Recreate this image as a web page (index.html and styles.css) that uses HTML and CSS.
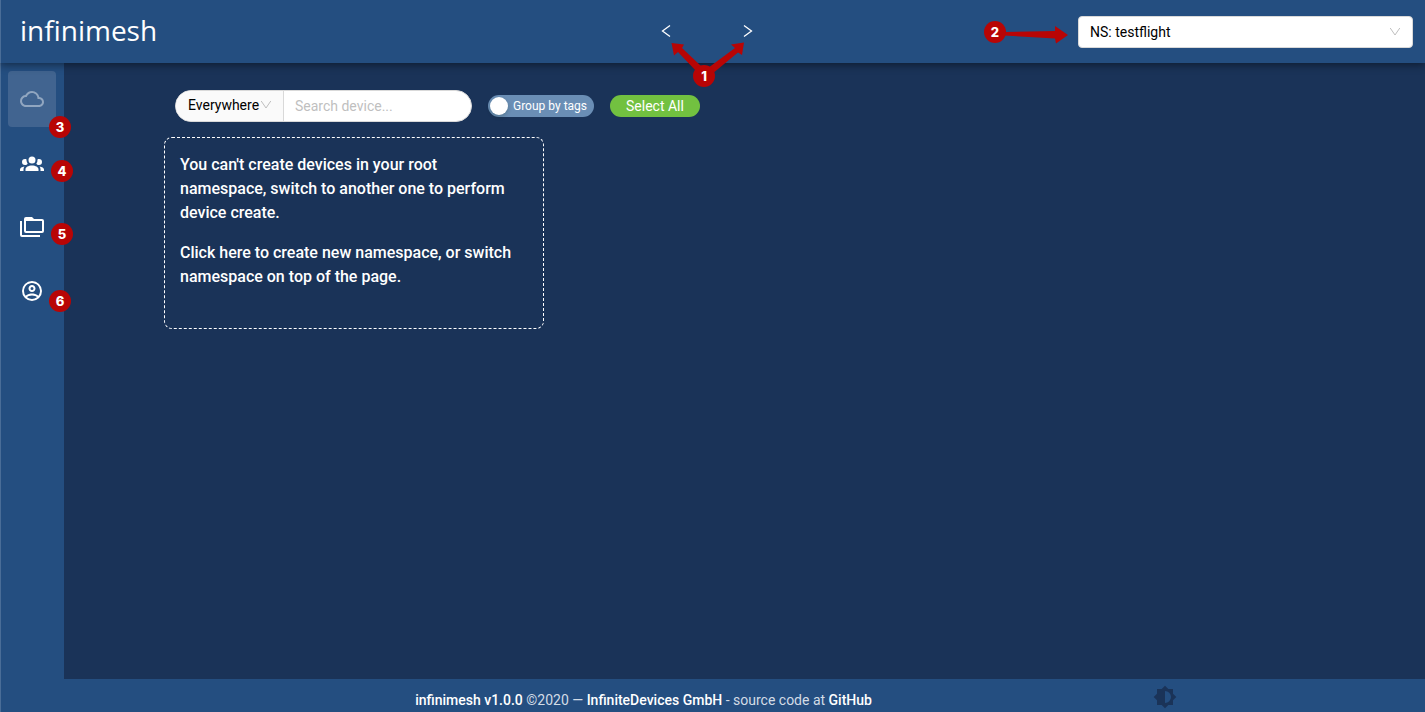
FILE: index.html
```html
<!DOCTYPE html>
<html lang="en">
<head>
<meta charset="utf-8">
<title>infinimesh</title>
<link rel="stylesheet" href="styles.css">
</head>
<body>
<div class="app">
  <header class="header">
    <a class="logo" href="#">infinimesh</a>
    <nav class="pager" aria-label="History">
      <button class="pager-button" type="button" aria-label="Back"><svg width="14" height="14" viewBox="0 0 14 14"><path d="M10 1.500 2.500 7l7.500 5.500"/></svg></button>
      <button class="pager-button" type="button" aria-label="Forward"><svg width="14" height="14" viewBox="0 0 14 14"><path d="M3 1.500 10.500 7 3 12.500"/></svg></button>
    </nav>
    <div class="namespace">
      <select class="namespace-select" aria-label="Namespace"><option>NS: testflight</option></select>
      <svg class="chevron" width="12" height="12" viewBox="0 0 12 12"><path d="M1.200 2 6 9 10.800 2"/></svg>
    </div>
  </header>

  <nav class="sidebar" aria-label="Main">
    <a class="side-link active" href="#" aria-label="Devices"><svg width="24" height="24" viewBox="0 0 24 24"><path fill="currentColor" d="M19.350 10.040A7.490 7.490 0 0 0 12 4C9.110 4 6.600 5.640 5.350 8.040A5.994 5.994 0 0 0 0 14c0 3.310 2.690 6 6 6h13c2.760 0 5-2.240 5-5 0-2.640-2.050-4.780-4.650-4.960zM19 18H6c-2.210 0-4-1.790-4-4s1.790-4 4-4h.710C7.370 7.690 9.480 6 12 6c3.040 0 5.500 2.460 5.500 5.500v.500H19c1.660 0 3 1.340 3 3s-1.340 3-3 3z"/></svg></a>
    <a class="side-link" href="#" aria-label="Accounts"><svg width="24" height="24" viewBox="0 0 24 24" fill="currentColor"><path d="M12 5.500A3.500 3.500 0 0 1 15.500 9 3.500 3.500 0 0 1 12 12.500 3.500 3.500 0 0 1 8.500 9 3.500 3.500 0 0 1 12 5.500M5 8c.560 0 1.080.150 1.530.420-.150 1.430.270 2.850 1.130 3.960C7.160 13.340 6.160 14 5 14a3 3 0 0 1-3-3 3 3 0 0 1 3-3m14 0a3 3 0 0 1 3 3 3 3 0 0 1-3 3c-1.160 0-2.160-.660-2.660-1.620a5.536 5.536 0 0 0 1.130-3.960C17.920 8.150 18.440 8 19 8M5.500 18.250c0-2.070 2.910-3.750 6.500-3.750s6.500 1.680 6.500 3.750V20h-13v-1.750M0 20v-1.500c0-1.390 1.890-2.560 4.450-2.900-.590.680-.950 1.620-.950 2.650V20H0m24 0h-3.500v-1.750c0-1.030-.360-1.970-.950-2.650 2.560.340 4.450 1.510 4.450 2.900V20z"/></svg></a>
    <a class="side-link" href="#" aria-label="Namespaces"><svg width="24" height="24" viewBox="0 0 24 24" fill="currentColor"><path d="M22 4a2 2 0 0 1 2 2v10a2 2 0 0 1-2 2H6a2 2 0 0 1-2-2V4a2 2 0 0 1 2-2h6l2 2h8M2 6v14h18v2H2a2 2 0 0 1-2-2V6h2m4 0v10h16V6H6z"/></svg></a>
    <a class="side-link" href="#" aria-label="Profile"><svg width="24" height="24" viewBox="0 0 24 24" fill="currentColor"><path d="M12 2A10 10 0 0 0 2 12a10 10 0 0 0 10 10 10 10 0 0 0 10-10A10 10 0 0 0 12 2M7.070 18.280c.430-.900 3.050-1.780 4.930-1.780s4.510.880 4.930 1.780A7.893 7.893 0 0 1 12 20c-1.860 0-3.570-.640-4.930-1.720m11.290-1.450c-1.430-1.740-4.900-2.330-6.360-2.330s-4.930.590-6.360 2.330A7.928 7.928 0 0 1 4 12c0-4.410 3.590-8 8-8s8 3.590 8 8c0 1.820-.620 3.500-1.640 4.830M12 6c-1.940 0-3.500 1.560-3.500 3.500S10.060 13 12 13s3.500-1.560 3.500-3.500S13.940 6 12 6m0 5a1.500 1.500 0 1 1 0-3 1.500 1.500 0 0 1 0 3z"/></svg></a>
  </nav>

  <main class="content">
    <div class="toolbar">
      <div class="search">
        <div class="scope">
          <select class="scope-select" aria-label="Search scope"><option>Everywhere</option></select>
          <svg class="chevron" width="12" height="12" viewBox="0 0 12 12"><path d="M1.200 2 6 9 10.800 2"/></svg>
        </div>
        <input class="search-input" type="text" placeholder="Search device..." aria-label="Search device">
      </div>
      <label class="switch"><input class="switch-input" type="checkbox">Group by tags</label>
      <button class="select-all" type="button">Select All</button>
    </div>
    <section class="notice">
      <p class="notice-text">You can't create devices in your root namespace, switch to another one to perform device create.</p>
      <p class="notice-text">Click here to create new namespace, or switch namespace on top of the page.</p>
    </section>
  </main>

  <footer class="footer">
    <p class="credits"><a class="credit-link" href="#">infinimesh v1.0.0</a> ©2020 — <a class="credit-link" href="#">InfiniteDevices GmbH</a> - source code at <a class="credit-link" href="#">GitHub</a></p>
    <button class="theme" type="button" aria-label="Toggle theme"><svg width="24" height="24" viewBox="0 0 24 24" fill="currentColor"><path d="M12 18V6a6 6 0 0 1 6 6 6 6 0 0 1-6 6m8-2.690L23.310 12 20 8.690V4h-4.690L12 .690 8.690 4H4v4.690L.690 12 4 15.310V20h4.690L12 23.310 15.310 20H20v-4.690z"/></svg></button>
  </footer>

  <svg class="arrows" width="1425" height="120" viewBox="0 0 1425 120" aria-hidden="true">
    <path d="M671.500 43 684 44.500 682 48 701 66 696 71 678 52 674 55.500z"/>
    <path d="M744 42.500 742 55 738 52.500 712 74 708 68 735 48 731 44.500z"/>
    <path d="M1004 32 1055 31 1055 26 1068 35 1056 43.500 1055 38.500 1004 35.500z"/>
  </svg>
  <span class="marker m1">1</span>
  <span class="marker m2">2</span>
  <span class="marker m3">3</span>
  <span class="marker m4">4</span>
  <span class="marker m5">5</span>
  <span class="marker m6">6</span>
</div>
</body>
</html>
```
FILE: styles.css
```css
* { box-sizing: border-box; }

body {
  margin: 0;
  font-family: Roboto, "Liberation Sans", sans-serif;
  font-size: 14px;
  color: #fff;
  background: #1a3358;
}

a { color: inherit; text-decoration: none; }
button, input, select { font: inherit; margin: 0; }
button { padding: 0; border: 0; background: none; color: inherit; cursor: pointer; }
svg { display: block; }

.app {
  position: relative;
  display: grid;
  grid-template: 63px 1fr 33px / 64px 1fr;
  min-height: 100vh;
  overflow: hidden;
}

.header {
  grid-column: 1 / -1;
  display: grid;
  grid-template-columns: 1fr auto 1fr;
  align-items: center;
  padding-right: 12px;
  background: #244e80;
  box-shadow: 0 2px 8px rgba(0, 0, 0, .45);
  border-left: 1px solid #4a6d97;
  z-index: 1;
}

.logo {
  padding: 0 0 4px 19px;
  font-family: "Open Sans", sans-serif;
  font-size: 28px;
  line-height: 40px;
}

.pager { display: flex; gap: 67px; padding-bottom: 2px; }
.pager-button svg { fill: none; stroke: #fff; stroke-width: 1.3; }

.namespace { position: relative; justify-self: end; width: 335px; max-width: 100%; }
.namespace-select {
  width: 100%;
  height: 32px;
  padding: 0 32px 0 11px;
  border: 1px solid #d9d9d9;
  border-radius: 4px;
  background: #fff;
  color: #000;
  appearance: none;
}
.chevron {
  position: absolute;
  top: 10px;
  right: 12px;
  fill: none;
  stroke: #bfbfbf;
  pointer-events: none;
}

.sidebar {
  display: flex;
  flex-direction: column;
  gap: 8px;
  padding: 8px 8px 8px 7px;
  background: #244e80;
  border-left: 1px solid #4a6d97;
}
.side-link {
  display: grid;
  place-items: center;
  height: 56px;
  border-radius: 4px;
}
.active { background: #416490; color: #91a6c0; }

.content { padding: 27px 100px; }

.toolbar {
  display: flex;
  align-items: center;
  gap: 16px;
  padding-left: 11px;
}
.search {
  display: flex;
  width: 297px;
  height: 32px;
  border: 1px solid #d9d9d9;
  border-radius: 16px;
  background: #fff;
  overflow: hidden;
}
.scope { position: relative; width: 108px; border-right: 1px solid #d9d9d9; }
.scope-select {
  width: 100%;
  height: 30px;
  padding: 0 0 2px 12px;
  border: 0;
  background: #fafafa;
  color: #000;
  appearance: none;
}
.scope .chevron { top: 8px; right: 11px; }
.search-input {
  flex: 1;
  min-width: 0;
  padding: 0 11px;
  border: 0;
  background: none;
}
.search-input::placeholder { color: #bfbfbf; }

.switch {
  display: flex;
  align-items: center;
  gap: 5px;
  height: 22px;
  padding: 0 7px 0 2px;
  border-radius: 11px;
  background: #6a8eb5;
  font-size: 12px;
}
.switch-input {
  appearance: none;
  width: 18px;
  height: 18px;
  border-radius: 9px;
  background: #fff;
  box-shadow: 0 2px 4px rgba(0, 35, 11, .2);
}
.select-all {
  height: 22px;
  padding: 0 16px;
  border-radius: 11px;
  background: #72c140;
}

.notice {
  width: 380px;
  max-width: 100%;
  min-height: 192px;
  margin-top: 15px;
  padding: 15px 24px 15px 15px;
  border: 1px dashed #fff;
  border-radius: 8px;
}
.notice-text {
  margin: 0 0 16px;
  font-size: 16px;
  font-weight: 500;
  line-height: 24px;
}

.footer {
  grid-column: 1 / -1;
  display: grid;
  grid-template-columns: 133fr 1020fr 272fr;
  align-items: start;
  background: #244e80;
  border-left: 1px solid #4a6d97;
}
.credits {
  grid-column: 2;
  margin: 0;
  padding-top: 10px;
  text-align: center;
  line-height: 22px;
  color: #d3dce6;
}
.credit-link { font-weight: 500; color: #fff; }
.theme { justify-self: start; margin-top: 6px; color: #1a3358; }

.arrows { position: absolute; top: 0; left: 0; fill: #b80505; z-index: 2; pointer-events: none; }
.marker {
  position: absolute;
  z-index: 3;
  width: 22px;
  height: 22px;
  border-radius: 11px;
  background: #b80505;
  font-family: Inter, sans-serif;
  font-size: 13px;
  font-weight: 800;
  line-height: 22px;
  text-align: center;
}
.m1 { left: 693px; top: 65px; }
.m2 { left: 984px; top: 21px; }
.m3 { left: 49px; top: 116px; }
.m4 { left: 51px; top: 160px; }
.m5 { left: 51px; top: 223px; }
.m6 { left: 49px; top: 290px; }
```
